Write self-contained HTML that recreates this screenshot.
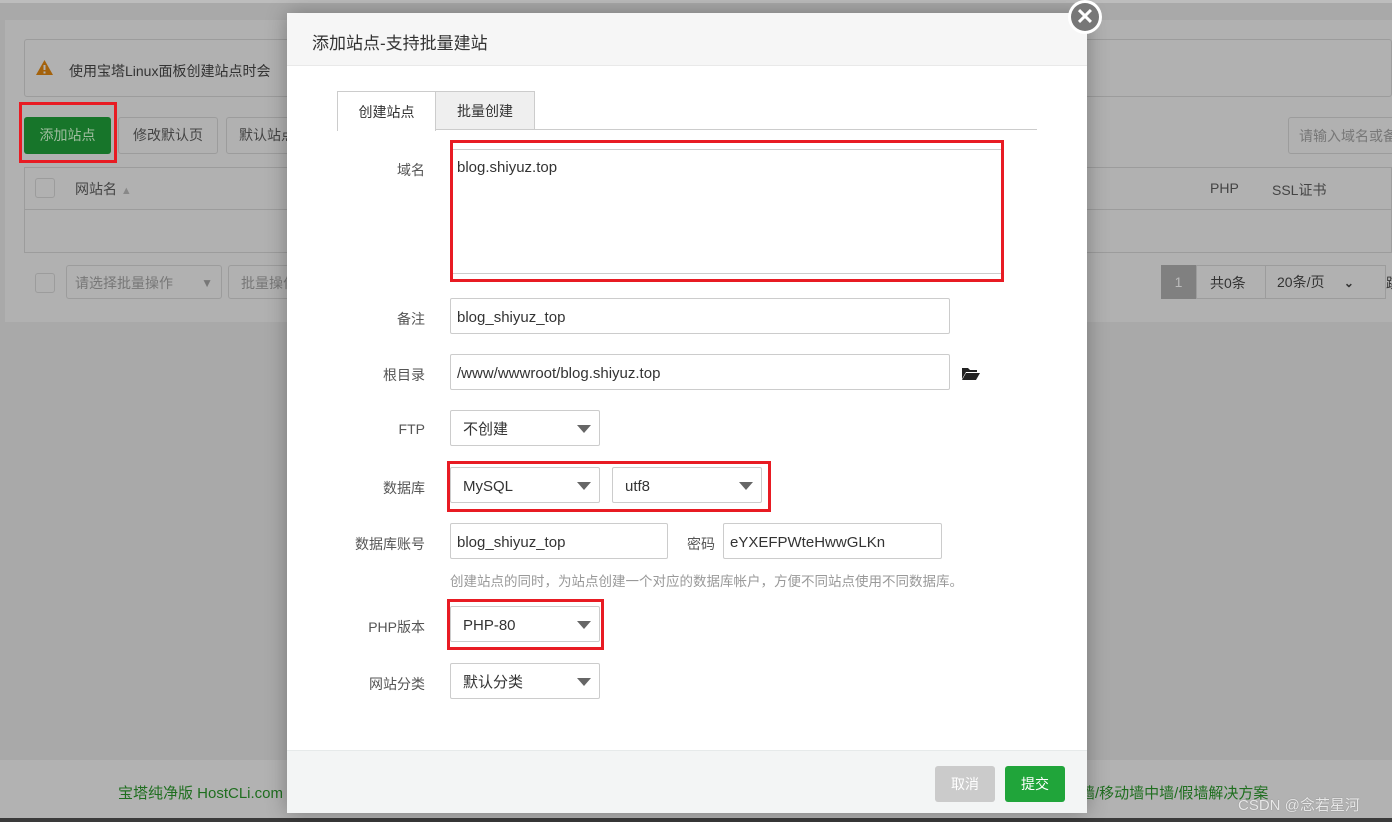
<!DOCTYPE html>
<html><head><meta charset="utf-8"><style>
*{box-sizing:border-box;margin:0;padding:0}
body{width:1392px;height:822px;position:relative;overflow:hidden;background:#a9a9a9;font-family:"Liberation Sans","Noto Sans CJK SC",sans-serif;font-size:14px;color:#444}
.abs{position:absolute}
.bgtop{left:0;top:0;width:1392px;height:3px;background:#bdbdbd}
.panel{left:5px;top:20px;width:1387px;height:302px;background:#b1b1b1}
.gb{border:1px solid #9c9c9c;border-radius:3px}
.foot{left:0;top:760px;width:1392px;height:58px;background:#b2b2b2}
.modal{left:287px;top:13px;width:800px;height:800px;background:#fff;box-shadow:0 0 20px rgba(0,0,0,.3)}
.mh{left:0;top:0;width:800px;height:53px;background:#f6f6f6;border-bottom:1px solid #e9e9e9;font-size:17px;color:#333;padding:16px 0 0 25px}
.mf{left:0;top:737px;width:800px;height:63px;background:#f3f5f5;border-top:1px solid #e6eaea}
.lbl{width:138px;text-align:right;color:#555;font-size:14px}
.inp{border:1px solid #ccc;border-radius:2px;height:36px;padding:0 6px;line-height:38px;font-size:15px;color:#333;background:#fff}
.sel{padding-left:12px}
.sel::after{content:"";position:absolute;right:8px;top:14px;border:7px solid transparent;border-top:8px solid #666;border-bottom:0}
.red{border:3px solid #e81b23}
</style></head><body>
<div class="abs bgtop"></div>
<div class="abs panel"></div>
<div class="abs gb" style="left:24px;top:39px;width:1368px;height:58px"></div>
<svg class="abs" style="left:35px;top:59px" width="19" height="17"><path d="M9.5 1L18 16H1z" fill="#a4620c"/><rect x="8.5" y="6" width="2" height="5" fill="#b1b1b1"/><rect x="8.5" y="12.5" width="2" height="2" fill="#b1b1b1"/></svg>
<div class="abs" style="left:69px;top:61px;color:#333;font-size:14px">使用宝塔Linux面板创建站点时会</div>
<div class="abs red" style="left:19px;top:102px;width:98px;height:61px"></div>
<div class="abs" style="left:24px;top:117px;width:87px;height:37px;background:#17752a;border-radius:3px;color:#9fbd9f;text-align:center;line-height:37px">添加站点</div>
<div class="abs gb" style="left:118px;top:117px;width:100px;height:37px;text-align:center;line-height:35px;color:#444">修改默认页</div>
<div class="abs gb" style="left:226px;top:117px;width:70px;height:37px;line-height:35px;padding-left:12px;color:#444;overflow:hidden">默认站点</div>
<div class="abs" style="left:24px;top:167px;width:1368px;height:86px;border:1px solid #9c9c9c"></div>
<div class="abs" style="left:24px;top:209px;width:1368px;height:1px;background:#9c9c9c"></div>
<div class="abs gb" style="left:35px;top:178px;width:20px;height:20px"></div>
<div class="abs" style="left:75px;top:179px;color:#444">网站名 <span style="color:#888;font-size:11px">▲</span></div>
<div class="abs" style="left:1210px;top:180px;color:#444">PHP</div>
<div class="abs" style="left:1272px;top:180px;color:#444">SSL证书</div>
<div class="abs gb" style="left:1288px;top:117px;width:110px;height:37px;line-height:37px;padding-left:10px;color:#777">请输入域名或备</div>
<div class="abs gb" style="left:35px;top:273px;width:20px;height:20px"></div>
<div class="abs gb" style="left:66px;top:265px;width:156px;height:34px;line-height:34px;padding-left:8px;color:#777">请选择批量操作 <span style="position:absolute;right:8px;color:#777;font-size:12px">▼</span></div>
<div class="abs gb" style="left:228px;top:265px;width:70px;height:34px;line-height:34px;padding-left:12px;color:#777">批量操作</div>
<div class="abs" style="left:1161px;top:265px;width:35px;height:34px;background:#808080;color:#bbb;text-align:center;line-height:34px">1</div>
<div class="abs" style="left:1196px;top:265px;width:190px;height:34px;border:1px solid #9c9c9c;line-height:34px;color:#333"><span style="position:absolute;left:13px">共0条</span><span style="position:absolute;left:68px;top:-1px;height:34px;border-left:1px solid #9c9c9c;padding-left:11px">20条/页 &nbsp;&nbsp;&nbsp;&nbsp;<b style="font-size:12px">⌄</b></span></div>
<div class="abs" style="left:1386px;top:273px;color:#333">跳</div>
<div class="abs foot"></div>
<div class="abs" style="left:118px;top:782px;color:#1f6e1f;font-size:15px">宝塔纯净版 HostCLi.com</div>
<div class="abs" style="left:1080px;top:782px;color:#1f6e1f;font-size:15px">墙/移动墙中墙/假墙解决方案</div>
<div class="abs" style="left:1238px;top:794px;color:#e8e8e8;font-size:15px;text-shadow:0 0 1px #777">CSDN @念若星河</div>
<div class="abs" style="left:0;top:818px;width:1392px;height:4px;background:#3a3a3a"></div>

<div class="abs modal">
 <div class="abs mh">添加站点-支持批量建站</div>
 <div class="abs" style="left:50px;top:78px;width:99px;height:40px;border:1px solid #ccc;border-bottom:none;background:#fff;text-align:center;line-height:40px;font-size:14px;color:#333">创建站点</div>
 <div class="abs" style="left:148px;top:78px;width:100px;height:39px;border:1px solid #ccc;background:#efefef;text-align:center;line-height:39px;font-size:14px;color:#333">批量创建</div>
 <div class="abs" style="left:248px;top:116px;width:502px;height:1px;background:#ccc"></div>
 <div class="abs lbl" style="top:147px">域名</div>
 <div class="abs red" style="left:163px;top:127px;width:554px;height:142px"></div>
 <div class="abs" style="left:166px;top:136px;width:548px;height:125px;border-top:1px solid #ccc;border-bottom:1px solid #ccc;padding:9px 4px;font-size:15px;color:#333">blog.shiyuz.top</div>
 <div class="abs lbl" style="top:296px">备注</div>
 <div class="abs inp" style="left:163px;top:285px;width:500px">blog_shiyuz_top</div>
 <div class="abs lbl" style="top:352px">根目录</div>
 <div class="abs inp" style="left:163px;top:341px;width:500px">/www/wwwroot/blog.shiyuz.top</div>
 <svg class="abs" style="left:674px;top:352px" width="20" height="16"><path d="M1 3h6l2 2h7v2H5L1 14z" fill="#222"/><path d="M5 8h14l-4 7H1z" fill="#222"/></svg>
 <div class="abs lbl" style="top:408px">FTP</div>
 <div class="abs inp sel" style="left:163px;top:397px;width:150px">不创建</div>
 <div class="abs lbl" style="top:465px">数据库</div>
 <div class="abs red" style="left:160px;top:448px;width:324px;height:51px"></div>
 <div class="abs inp sel" style="left:163px;top:454px;width:150px">MySQL</div>
 <div class="abs inp sel" style="left:325px;top:454px;width:150px">utf8</div>
 <div class="abs lbl" style="top:521px">数据库账号</div>
 <div class="abs inp" style="left:163px;top:510px;width:218px">blog_shiyuz_top</div>
 <div class="abs" style="left:400px;top:521px;color:#555">密码</div>
 <div class="abs inp" style="left:436px;top:510px;width:219px">eYXEFPWteHwwGLKn</div>
 <div class="abs" style="left:163px;top:557px;color:#999;font-size:13.5px">创建站点的同时，为站点创建一个对应的数据库帐户，方便不同站点使用不同数据库。</div>
 <div class="abs lbl" style="top:604px">PHP版本</div>
 <div class="abs red" style="left:160px;top:586px;width:157px;height:51px"></div>
 <div class="abs inp sel" style="left:163px;top:593px;width:150px">PHP-80</div>
 <div class="abs lbl" style="top:661px">网站分类</div>
 <div class="abs inp sel" style="left:163px;top:650px;width:150px">默认分类</div>
 <div class="abs mf">
  <div class="abs" style="left:648px;top:15px;width:60px;height:36px;background:#cbcbcb;border-radius:3px;color:#fff;text-align:center;line-height:36px">取消</div>
  <div class="abs" style="left:718px;top:15px;width:60px;height:36px;background:#20a53a;border-radius:3px;color:#fff;text-align:center;line-height:36px">提交</div>
 </div>
</div>
<div class="abs" style="left:1068px;top:0;width:34px;height:34px;border-radius:50%;background:#fff"></div>
<div class="abs" style="left:1071px;top:3px;width:28px;height:28px;border-radius:50%;background:#777;color:#fff;text-align:center;line-height:27px;font-size:22px;font-weight:bold">✕</div>
</body></html>
